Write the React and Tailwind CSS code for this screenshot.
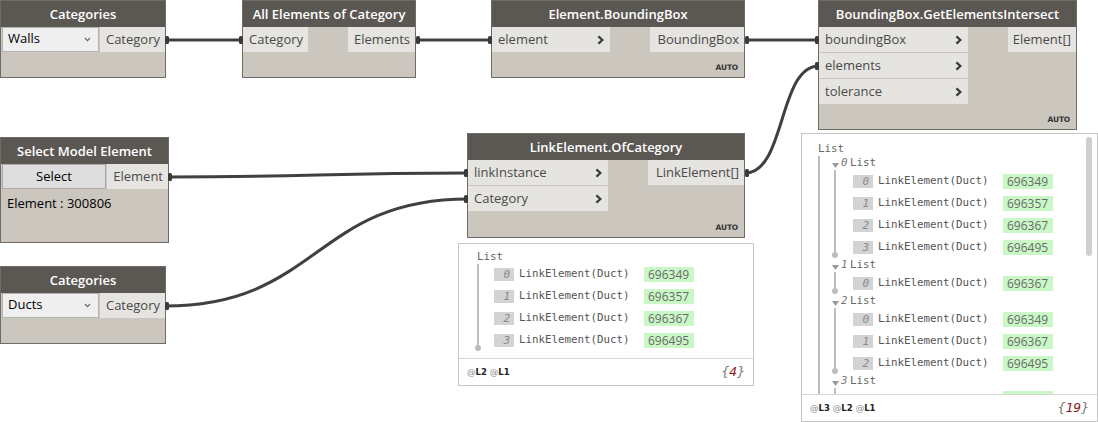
import React from "react";

function Chev() {
  return (
    <svg width="7" height="10" viewBox="0 0 7 10" className="shrink-0">
      <path d="M1.4 1.4 L5.4 5 L1.4 8.6" fill="none" stroke="#3a3a3a" strokeWidth="2.2" />
    </svg>
  );
}

function DownChev() {
  return (
    <svg width="7" height="5" viewBox="0 0 7 5" className="shrink-0">
      <path d="M1 1 L3.5 3.6 L6 1" fill="none" stroke="#666" strokeWidth="1.1" />
    </svg>
  );
}

function Title({ children }) {
  return (
    <div className="h-[26px] shrink-0 bg-[#5b5854] text-white text-[13px] font-semibold flex items-center justify-center leading-none">
      {children}
    </div>
  );
}

function InPort({ label, chev = true }) {
  return (
    <div className="h-[25px] bg-[#e5e4e0] flex items-center justify-between pl-[6px] pr-[6px] pt-[1px] text-[13px] text-[#4a4a4a]">
      <span>{label}</span>
      {chev ? <Chev /> : null}
    </div>
  );
}

function OutPort({ label, cls }) {
  return (
    <div className={"h-[25px] bg-[#e5e4e0] flex items-center justify-end pr-[5px] pt-[1px] text-[13px] text-[#4a4a4a] " + cls}>
      {label}
    </div>
  );
}

function Auto() {
  return (
    <div className="mt-auto flex justify-end pr-[6px] pb-[4px] text-[7.5px] font-bold text-[#333] font-['DejaVu_Sans',sans-serif] tracking-tight">
      AUTO
    </div>
  );
}

function Dropdown({ value }) {
  return (
    <div className="ml-px w-[97px] h-[25px] bg-[#efefef] border border-[#b4b4b4] flex items-start justify-between pl-[5px] pr-[7px] pt-[1px] text-[13px] text-black">
      <span>{value}</span>
      <span className="pt-[8px]"><DownChev /></span>
    </div>
  );
}

function IndexBox({ n }) {
  return (
    <div className="w-[20px] h-[13px] bg-[#d3d3d3] text-[#8a8a8a] italic text-[11px] leading-[13px] text-right pr-[4px] shrink-0">
      {n}
    </div>
  );
}

function Row({ n, value, textW }) {
  return (
    <div className="h-[22px] flex items-center">
      <IndexBox n={n} />
      <span className={"pl-[5px] text-[#555] shrink-0 " + textW}>LinkElement(Duct)</span>
      <span className="w-[50px] h-[15px] bg-[#c9f7c6] text-[#6a6a6a] text-[12px] leading-[15px] pl-[4px] font-['Open_Sans',sans-serif] shrink-0">
        {value}
      </span>
    </div>
  );
}

function Tri() {
  return (
    <svg width="7" height="5" viewBox="0 0 7 5" className="shrink-0 mt-[4px]">
      <path d="M0 0 L7 0 L3.5 5 Z" fill="#9a9a9a" />
    </svg>
  );
}

function SubList({ idx, rows, cut }) {
  return (
    <div className="relative">
      <div className="h-[14px] flex items-center pl-[30px]">
        <Tri />
        <span className="italic text-[#777] pl-[2px] w-[10px]">{idx}</span>
        <span className="pl-[1px] text-[#666]">List</span>
      </div>
      {!cut && (
        <>
          <div className="absolute left-[32px] top-[14px] bottom-[3px] w-[2px] bg-[#bdbdbd]" />
          <div className="absolute left-[30px] bottom-[0px] w-[6px] h-[6px] rounded-full bg-[#bdbdbd]" />
        </>
      )}
      {cut ? (
        <>
          <div className="absolute left-[32px] top-[14px] h-[20px] w-[2px] bg-[#bdbdbd]" />
          <div className="pl-[201px] pt-[3px] h-[22px]">
            <div className="w-[50px] h-[15px] bg-[#c9f7c6]" />
          </div>
        </>
      ) : (
        <div className="pl-[51px]">
          {rows.map((r, i) => (
            <Row key={i} n={i} value={r} textW="w-[130px]" />
          ))}
        </div>
      )}
    </div>
  );
}

function Footer({ levels, count }) {
  return (
    <div className="h-[27px] shrink-0 border-t border-[#d6d6d6] flex items-center justify-between pl-[8px] pr-[8px]">
      <div className="flex gap-[3px] text-[8.5px] font-['DejaVu_Sans',sans-serif]">
        {levels.map((l) => (
          <span key={l}>
            <span className="text-[#888]">@</span>
            <span className="font-bold text-[#222]">{l}</span>
          </span>
        ))}
      </div>
      <div className="italic text-[13px] text-[#777]">
        {"{"}
        <span className="text-[#8b1c1c]">{count}</span>
        {"}"}
      </div>
    </div>
  );
}

export default function App() {
  return (
    <div className="relative w-[1098px] h-[422px] bg-white overflow-hidden font-['Open_Sans',sans-serif]">
      {/* Categories (Walls) */}
      <div className="absolute left-0 top-0 w-[166px] h-[78px] border border-[#6f6b67] bg-[#cbc7bf] flex flex-col">
        <Title>Categories</Title>
        <div className="flex gap-px">
          <Dropdown value="Walls" />
          <OutPort label="Category" cls="w-[65px]" />
        </div>
      </div>

      {/* All Elements of Category */}
      <div className="absolute left-[242px] top-0 w-[174px] h-[78px] border border-[#6f6b67] bg-[#cbc7bf] flex flex-col">
        <Title>All Elements of Category</Title>
        <div className="flex justify-between">
          <div className="w-[65px]"><InPort label="Category" chev={false} /></div>
          <OutPort label="Elements" cls="w-[67px]" />
        </div>
      </div>

      {/* Element.BoundingBox */}
      <div className="absolute left-[491px] top-0 w-[254px] h-[78px] border border-[#6f6b67] bg-[#cbc7bf] flex flex-col">
        <Title>Element.BoundingBox</Title>
        <div className="flex justify-between">
          <div className="w-[118px]"><InPort label="element" /></div>
          <OutPort label="BoundingBox" cls="w-[94px]" />
        </div>
        <Auto />
      </div>

      {/* BoundingBox.GetElementsIntersect */}
      <div className="absolute left-[818px] top-0 w-[259px] h-[130px] border border-[#6f6b67] bg-[#cbc7bf] flex flex-col">
        <Title>BoundingBox.GetElementsIntersect</Title>
        <div className="flex justify-between">
          <div className="w-[149px] flex flex-col gap-px">
            <InPort label="boundingBox" />
            <InPort label="elements" />
            <InPort label="tolerance" />
          </div>
          <OutPort label="Element[]" cls="w-[68px]" />
        </div>
        <Auto />
      </div>

      {/* Select Model Element */}
      <div className="absolute left-0 top-[137px] w-[169px] h-[106px] border border-[#6f6b67] bg-[#cbc7bf] flex flex-col">
        <Title>Select Model Element</Title>
        <div className="flex gap-px">
          <div className="ml-px w-[104px] h-[25px] bg-[#dedede] border border-[#a9a9a9] flex items-center justify-center text-[13px] text-black">
            Select
          </div>
          <OutPort label="Element" cls="w-[61px]" />
        </div>
        <div className="pl-[6px] pt-[5px] text-[13px] text-black">Element : 300806</div>
      </div>

      {/* Categories (Ducts) */}
      <div className="absolute left-0 top-[266px] w-[166px] h-[78px] border border-[#6f6b67] bg-[#cbc7bf] flex flex-col">
        <Title>Categories</Title>
        <div className="flex gap-px">
          <Dropdown value="Ducts" />
          <OutPort label="Category" cls="w-[65px]" />
        </div>
      </div>

      {/* LinkElement.OfCategory */}
      <div className="absolute left-[467px] top-[133px] w-[278px] h-[105px] border border-[#6f6b67] bg-[#cbc7bf] flex flex-col">
        <Title>LinkElement.OfCategory</Title>
        <div className="flex justify-between">
          <div className="w-[140px] flex flex-col gap-px">
            <InPort label="linkInstance" />
            <InPort label="Category" />
          </div>
          <OutPort label="LinkElement[]" cls="w-[96px]" />
        </div>
        <Auto />
      </div>

      {/* Watch 1 */}
      <div className="absolute left-[458px] top-[243px] w-[296px] h-[143px] border border-[#c6c6c6] bg-white flex flex-col font-['DejaVu_Sans_Mono',monospace] text-[10.8px]">
        <div className="relative flex-1 pt-[7px]">
          <div className="h-[12px] flex items-center pl-[18px] text-[#666]">List</div>
          <div className="absolute left-[18px] top-[20px] h-[84px] w-[2px] bg-[#bdbdbd]" />
          <div className="absolute left-[16px] top-[101px] w-[6px] h-[6px] rounded-full bg-[#bdbdbd]" />
          <div className="pl-[35px]">
            <Row n={0} value="696349" textW="w-[130px]" />
            <Row n={1} value="696357" textW="w-[130px]" />
            <Row n={2} value="696367" textW="w-[130px]" />
            <Row n={3} value="696495" textW="w-[130px]" />
          </div>
        </div>
        <Footer levels={["L2", "L1"]} count="4" />
      </div>

      {/* Watch 2 */}
      <div className="absolute left-[801px] top-[133px] w-[297px] h-[289px] border border-[#c6c6c6] bg-white flex flex-col font-['DejaVu_Sans_Mono',monospace] text-[10.8px]">
        <div className="relative flex-1 overflow-hidden pt-[8px]">
          <div className="h-[14px] flex items-center pl-[16px] text-[#666]">List</div>
          <div className="absolute left-[16px] top-[22px] bottom-0 w-[2px] bg-[#bdbdbd]" />
          <SubList idx="0" rows={["696349", "696357", "696367", "696495"]} />
          <SubList idx="1" rows={["696367"]} />
          <SubList idx="2" rows={["696349", "696367", "696495"]} />
          <SubList idx="3" rows={[]} cut />
          <div className="absolute left-[284px] top-[3px] w-[6px] h-[119px] rounded-full bg-[#cfcfcf]" />
        </div>
        <Footer levels={["L3", "L2", "L1"]} count="19" />
      </div>

      {/* Wires */}
      <svg className="absolute inset-0 pointer-events-none" width="1098" height="422" viewBox="0 0 1098 422">
        <g fill="none" stroke="#404040" strokeWidth="3">
          <path d="M165 40 L243 40" />
          <path d="M416 40 L492 40" />
          <path d="M745 40 L819 40" />
          <path d="M745 173 C 786 173, 778 66, 819 66" />
          <path d="M168 177 C 318 177, 318 173, 468 173" />
          <path d="M165 306 C 318 306, 315 199, 468 199" />
        </g>
        <g fill="#3a3a3a">
          <rect x="165" y="36" width="4" height="8" rx="1.5" />
          <rect x="239" y="36" width="4" height="8" rx="1.5" />
          <rect x="416" y="36" width="4" height="8" rx="1.5" />
          <rect x="488" y="36" width="4" height="8" rx="1.5" />
          <rect x="745" y="36" width="4" height="8" rx="1.5" />
          <rect x="815" y="36" width="4" height="8" rx="1.5" />
          <rect x="815" y="62" width="4" height="8" rx="1.5" />
          <rect x="745" y="169" width="4" height="8" rx="1.5" />
          <rect x="168" y="173" width="4" height="8" rx="1.5" />
          <rect x="464" y="169" width="4" height="8" rx="1.5" />
          <rect x="165" y="302" width="4" height="8" rx="1.5" />
          <rect x="464" y="195" width="4" height="8" rx="1.5" />
        </g>
      </svg>
    </div>
  );
}
